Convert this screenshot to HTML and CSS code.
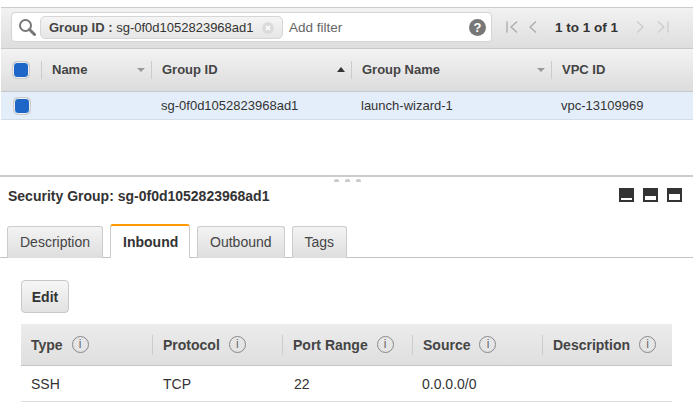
FILE: index.html
```html
<!DOCTYPE html>
<html lang="en">
<head>
  <meta charset="UTF-8">
  <meta name="viewport" content="width=device-width, initial-scale=1.0">
  <title>Security Groups</title>
  <link rel="stylesheet" href="styles.css">
</head>
<body>

  <div class="page">
    <div class="toolbar">
      <div class="search">
        <svg class="search-icon" width="18" height="18" viewBox="0 0 18 18"><circle cx="7.5" cy="7.5" r="5.5" fill="#fff" stroke="#777" stroke-width="2"/><path d="M11.5 11.5L16.5 16.5" stroke="#777" stroke-width="3" stroke-linecap="round"/></svg>
        <div class="chip">
          <b>Group ID :</b>&nbsp;<span>sg-0f0d1052823968ad1</span>
          <svg class="chip-x" width="12" height="12" viewBox="0 0 12 12"><circle cx="6" cy="6" r="6" fill="#dcdcdc"/><path d="M4 4L8 8M8 4L4 8" stroke="#fff" stroke-width="1.4"/></svg>
        </div>
        <span class="add-filter">Add filter</span>
        <span class="help">?</span>
      </div>
      <div class="pager">
        <svg width="14" height="14" viewBox="0 0 14 14"><path d="M2 1.5V12.5M12 1.5L6 7L12 12.5" fill="none" stroke="#aaa" stroke-width="1.3"/></svg>
        <svg class="pg-prev" width="10" height="14" viewBox="0 0 10 14"><path d="M8 1.5L2 7L8 12.5" fill="none" stroke="#aaa" stroke-width="1.3"/></svg>
        <span class="pg-text">1 to 1 of 1</span>
        <svg class="pg-next" width="10" height="14" viewBox="0 0 10 14"><path d="M2 1.5L8 7L2 12.5" fill="none" stroke="#ccc" stroke-width="1.3"/></svg>
        <svg width="14" height="14" viewBox="0 0 14 14"><path d="M2 1.5L8 7L2 12.5M12 1.5V12.5" fill="none" stroke="#ccc" stroke-width="1.3"/></svg>
      </div>
    </div>

    <div class="grid-head">
      <div class="gh-cell gh-check"><span class="check"></span></div>
      <div class="gh-cell">Name<span class="sort down"></span></div>
      <div class="gh-cell">Group ID<span class="sort up"></span></div>
      <div class="gh-cell">Group Name<span class="sort down"></span></div>
      <div class="gh-cell">VPC ID</div>
    </div>
    <div class="grid-row">
      <div class="gr-check"><span class="check"></span></div>
      <div></div>
      <div>sg-0f0d1052823968ad1</div>
      <div>launch-wizard-1</div>
      <div>vpc-13109969</div>
    </div>

    <div class="splitter">
      <div class="grip"><i></i><i></i><i></i></div>
    </div>

    <div class="detail-head">
      <h2>Security Group: sg-0f0d1052823968ad1</h2>
      <div class="panes">
        <span class="pane p1"></span>
        <span class="pane p2"></span>
        <span class="pane p3"></span>
      </div>
    </div>

    <div class="tabs">
      <div class="tab">Description</div>
      <div class="tab active">Inbound</div>
      <div class="tab">Outbound</div>
      <div class="tab">Tags</div>
    </div>

    <div class="tab-body">
      <button class="edit">Edit</button>
      <div class="rules">
        <div class="rules-head">
          <div class="rh-cell">Type<span class="info">i</span></div>
          <div class="rh-cell">Protocol<span class="info">i</span></div>
          <div class="rh-cell">Port Range<span class="info">i</span></div>
          <div class="rh-cell">Source<span class="info">i</span></div>
          <div class="rh-cell">Description<span class="info">i</span></div>
        </div>
        <div class="rules-row">
          <div>SSH</div>
          <div class="proto-cell">TCP</div>
          <div class="port-cell">22</div>
          <div>0.0.0.0/0</div>
          <div></div>
        </div>
      </div>
    </div>
  </div>

</body>
</html>
```

FILE: styles.css
```css
* {
  box-sizing: border-box;
}
html, body {
  margin: 0;
  background: #fff;
}
body {
  font-family: "Liberation Sans", Arial, sans-serif;
  font-size: 13px;
  color: #333;
  overflow: hidden;
}
.page {
  width: 692px;
  height: 410px;
  margin-left: 1px;
  padding-top: 7px;
}

/* top toolbar */
.toolbar {
  height: 42px;
  border-top: 1px solid #ccc;
  border-bottom: 1px solid #c8c8c8;
  background: linear-gradient(#f2f2f2, #dedede);
  display: flex;
  padding: 4px 0 0 10px;
}
.search {
  width: 481px;
  height: 30px;
  background: #fff;
  border: 1px solid #d4d4d4;
  border-radius: 4px;
  display: flex;
  align-items: center;
  padding-left: 6px;
}
.search-icon {
  flex: none;
  margin-right: 4px;
}
.chip {
  width: 243px;
  height: 23px;
  border: 1px solid #d6d6d6;
  border-radius: 5px;
  background: linear-gradient(#f5f5f5, #e6e6e6);
  display: flex;
  align-items: center;
  padding-left: 8px;
  white-space: nowrap;
  position: relative;
}
.chip b {
  color: #444;
}
.chip-x {
  position: absolute;
  left: 221px;
  top: 5px;
}
.add-filter {
  margin-left: 6px;
  font-size: 13.5px;
  color: #666;
}
.help {
  margin-left: auto;
  margin-right: 5px;
  width: 17px;
  height: 17px;
  border-radius: 50%;
  background: #777;
  color: #fff;
  font-weight: bold;
  font-size: 13px;
  line-height: 17px;
  text-align: center;
}
.pager {
  display: flex;
  align-items: center;
  height: 30px;
  margin-left: 13px;
}
.pg-prev {
  margin-left: 9px;
}
.pg-text {
  margin: 0 17px 0 17px;
  font-weight: bold;
  font-size: 13.5px;
  white-space: nowrap;
}
.pg-next {
  margin-right: 11px;
}

/* instances grid */
.grid-head, .grid-row {
  display: grid;
  grid-template-columns: 40px 110px 200px 200px 1fr;
}
.grid-head {
  height: 43px;
  background: linear-gradient(#f3f3f3, #dcdcdc);
  border-bottom: 1px solid #c8c8c8;
  align-items: center;
  font-weight: bold;
  font-size: 13px;
  color: #444;
}
.gh-cell {
  position: relative;
  height: 18px;
  line-height: 18px;
  padding-left: 10px;
  border-left: 1px solid #ccc;
}
.gh-check {
  border-left: none;
  padding-left: 12px;
}
.check {
  display: block;
  width: 16px;
  height: 16px;
  margin-top: 1px;
  border-radius: 4px;
  border: 1px solid #eee;
  box-shadow: 0 0 0 1px #ccc;
  background: #1e66c8;
}
.sort {
  position: absolute;
  top: 7px;
  width: 0;
  height: 0;
  border-left: 4px solid transparent;
  border-right: 4px solid transparent;
}
.sort.down {
  right: 6px;
  border-top: 4px solid #999;
}
.sort.up {
  right: 6px;
  top: 6px;
  border-bottom: 5px solid #333;
}
.grid-row {
  height: 28px;
  background: #e4eefa;
  border-bottom: 1px solid #d4dce6;
  align-items: center;
  font-size: 13px;
  color: #333;
}
.grid-row > div {
  padding-left: 10px;
}
.grid-row > .gr-check {
  padding-left: 13px;
}
.gr-check .check {
  margin-top: 0;
}

/* splitter */
.splitter {
  margin-top: 55px;
  height: 8px;
  margin-left: -1px;
  border-top: 2px solid #ccc;
  display: flex;
  justify-content: center;
}
.grip {
  display: flex;
  gap: 6px;
  margin: 2px 0 0 1px;
}
.grip i {
  display: block;
  width: 5px;
  height: 3px;
  border-radius: 2px 2px 0 0;
  background: #ccc;
}

/* detail panel */
.detail-head {
  height: 26px;
  display: flex;
  align-items: center;
  justify-content: space-between;
  padding: 0 11px 1px 7px;
}
.detail-head h2 {
  margin: 0;
  font-size: 14px;
  font-weight: bold;
  color: #333;
}
.panes {
  display: flex;
  gap: 9px;
  margin-top: -1px;
}
.pane {
  display: block;
  width: 15px;
  height: 14px;
  background: #333;
  position: relative;
}
.pane::after {
  content: "";
  position: absolute;
  left: 2px;
  right: 2px;
  bottom: 2px;
  background: #fff;
}
.pane.p1::after { height: 2px; }
.pane.p2::after { height: 4px; }
.pane.p3::after { height: 6px; }

.tabs {
  display: flex;
  align-items: flex-end;
  height: 34px;
  margin-top: 15px;
  border-bottom: 1px solid #c4c4c4;
  padding-left: 7px;
  margin-left: -1px;
  gap: 7px;
  font-size: 14px;
}
.tab {
  height: 32px;
  margin-bottom: -1px;
  padding: 0 12px;
  line-height: 31px;
  border: 1px solid #ccc;
  border-bottom: none;
  border-radius: 3px 3px 0 0;
  background: linear-gradient(#f3f3f3, #dedede);
  color: #444;
}
.tab.active {
  width: 80px;
  height: 34px;
  border-top: 2px solid #f90;
  background: #fff;
  font-weight: bold;
  color: #333;
  line-height: 33px;
}

/* inbound rules */
.tab-body {
  padding: 22px 20px 0;
}
.edit {
  display: block;
  width: 48px;
  height: 33px;
  border: 1px solid #c8c8c8;
  border-radius: 4px;
  background: linear-gradient(#f6f6f6, #e2e2e2);
  font-family: inherit;
  font-size: 14px;
  font-weight: bold;
  color: #333;
  padding: 0;
}
.rules {
  margin-top: 11px;
  width: 651px;
}
.rules-head, .rules-row {
  display: grid;
  grid-template-columns: 131px 130px 130px 130px 130px;
}
.rules-head {
  height: 42px;
  background: linear-gradient(#ececec, #dfdfdf);
  border-bottom: 1px solid #c4c4c4;
  align-items: center;
  font-weight: bold;
  font-size: 14px;
  color: #444;
}
.rh-cell {
  display: flex;
  align-items: center;
  height: 20px;
  padding-left: 10px;
  border-left: 1px solid #ccc;
}
.rh-cell:first-child {
  border-left: none;
}
.info {
  width: 17px;
  height: 17px;
  margin-left: 9px;
  border: 1px solid #888;
  border-radius: 50%;
  font-weight: normal;
  font-size: 12px;
  line-height: 15px;
  text-align: center;
  color: #666;
}
.rules-row {
  height: 36px;
  align-items: center;
  border-bottom: 1px solid #ddd;
  font-size: 14px;
  color: #333;
}
.rules-row > div {
  padding-left: 10px;
}
.rules-row > .proto-cell {
  padding-left: 11px;
}
.rules-row > .port-cell {
  padding-left: 12px;
}
```
